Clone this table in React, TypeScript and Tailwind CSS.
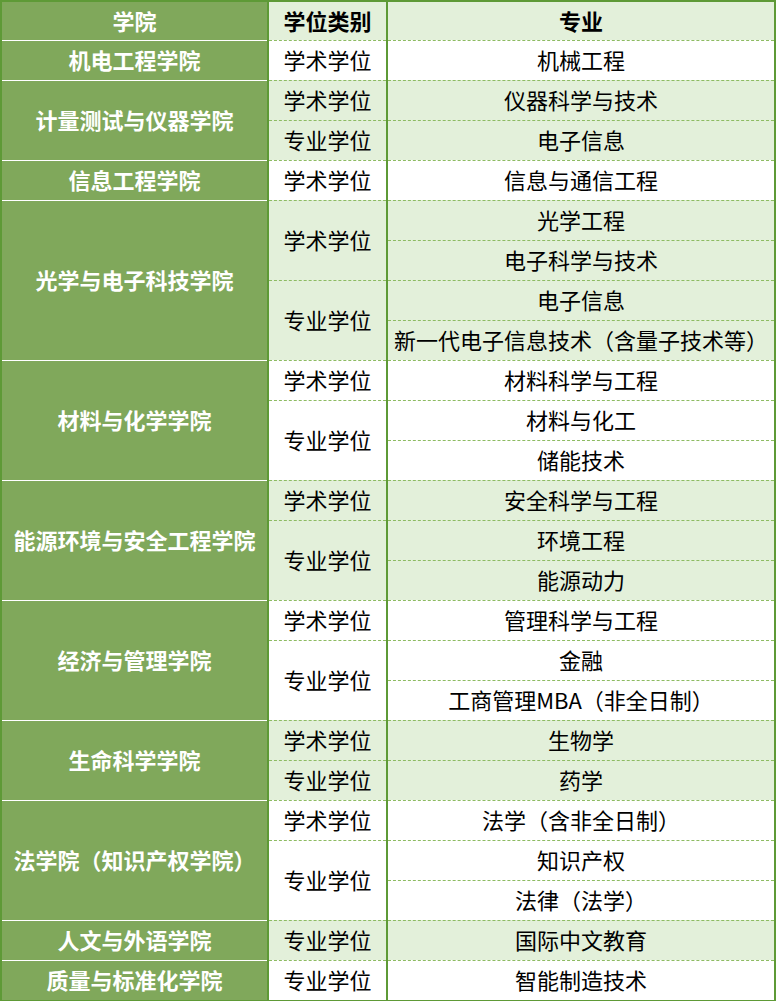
import React from "react";

type TypeRow = { t: string; majors: string[] };
type Group = { college: string; types: TypeRow[] };

const groups: Group[] = [
  { college: "机电工程学院", types: [{ t: "学术学位", majors: ["机械工程"] }] },
  {
    college: "计量测试与仪器学院",
    types: [
      { t: "学术学位", majors: ["仪器科学与技术"] },
      { t: "专业学位", majors: ["电子信息"] },
    ],
  },
  { college: "信息工程学院", types: [{ t: "学术学位", majors: ["信息与通信工程"] }] },
  {
    college: "光学与电子科技学院",
    types: [
      { t: "学术学位", majors: ["光学工程", "电子科学与技术"] },
      { t: "专业学位", majors: ["电子信息", "新一代电子信息技术（含量子技术等）"] },
    ],
  },
  {
    college: "材料与化学学院",
    types: [
      { t: "学术学位", majors: ["材料科学与工程"] },
      { t: "专业学位", majors: ["材料与化工", "储能技术"] },
    ],
  },
  {
    college: "能源环境与安全工程学院",
    types: [
      { t: "学术学位", majors: ["安全科学与工程"] },
      { t: "专业学位", majors: ["环境工程", "能源动力"] },
    ],
  },
  {
    college: "经济与管理学院",
    types: [
      { t: "学术学位", majors: ["管理科学与工程"] },
      { t: "专业学位", majors: ["金融", "工商管理MBA（非全日制）"] },
    ],
  },
  {
    college: "生命科学学院",
    types: [
      { t: "学术学位", majors: ["生物学"] },
      { t: "专业学位", majors: ["药学"] },
    ],
  },
  {
    college: "法学院（知识产权学院）",
    types: [
      { t: "学术学位", majors: ["法学（含非全日制）"] },
      { t: "专业学位", majors: ["知识产权", "法律（法学）"] },
    ],
  },
  { college: "人文与外语学院", types: [{ t: "专业学位", majors: ["国际中文教育"] }] },
  { college: "质量与标准化学院", types: [{ t: "专业学位", majors: ["智能制造技术"] }] },
];

const heightClass: Record<number, string> = {
  1: "h-[40px]",
  2: "h-[80px]",
  3: "h-[120px]",
  4: "h-[160px]",
};

export default function App() {
  return (
    <div
      className="w-[776px] border-2 border-[#5e9a36] text-[22px] leading-none text-black"
      style={{ fontFamily: '"Noto Sans CJK SC", "Noto Sans", sans-serif' }}
    >
      {/* header */}
      <div className="flex h-[38px]">
        <div className="flex w-[265px] items-center justify-center bg-[#80a85b] pb-[3px] font-bold text-white">
          学院
        </div>
        <div className="flex w-[119px] items-center justify-center border-l-2 border-[#5e9a36] bg-[#e3f0da] pb-[3px] font-bold">
          学位类别
        </div>
        <div className="flex flex-1 items-center justify-center border-l-2 border-[#5e9a36] bg-[#e3f0da] pb-[3px] font-bold">
          专业
        </div>
      </div>
      {groups.map((g, gi) => {
        const total = g.types.reduce((s, t) => s + t.majors.length, 0);
        const bg = gi % 2 === 1 ? "bg-[#e3f0da]" : "bg-white";
        return (
          <div key={gi} className="flex">
            <div
              className={`flex w-[265px] items-center justify-center border-t border-white bg-[#80a85b] pb-[3px] font-bold text-white ${heightClass[total]}`}
            >
              {g.college}
            </div>
            <div className={`flex w-[119px] flex-col border-l-2 border-[#5e9a36] ${bg}`}>
              {g.types.map((t, ti) => (
                <div
                  key={ti}
                  className={`flex items-center justify-center border-t border-dashed border-[#8dbb62] pb-[3px] ${heightClass[t.majors.length]}`}
                >
                  {t.t}
                </div>
              ))}
            </div>
            <div className={`flex flex-1 flex-col border-l-2 border-[#5e9a36] ${bg}`}>
              {g.types.flatMap((t) => t.majors).map((m, mi) => (
                <div
                  key={mi}
                  className="flex h-[40px] items-center justify-center border-t border-dashed border-[#8dbb62] pb-[3px]"
                >
                  {m}
                </div>
              ))}
            </div>
          </div>
        );
      })}
    </div>
  );
}
